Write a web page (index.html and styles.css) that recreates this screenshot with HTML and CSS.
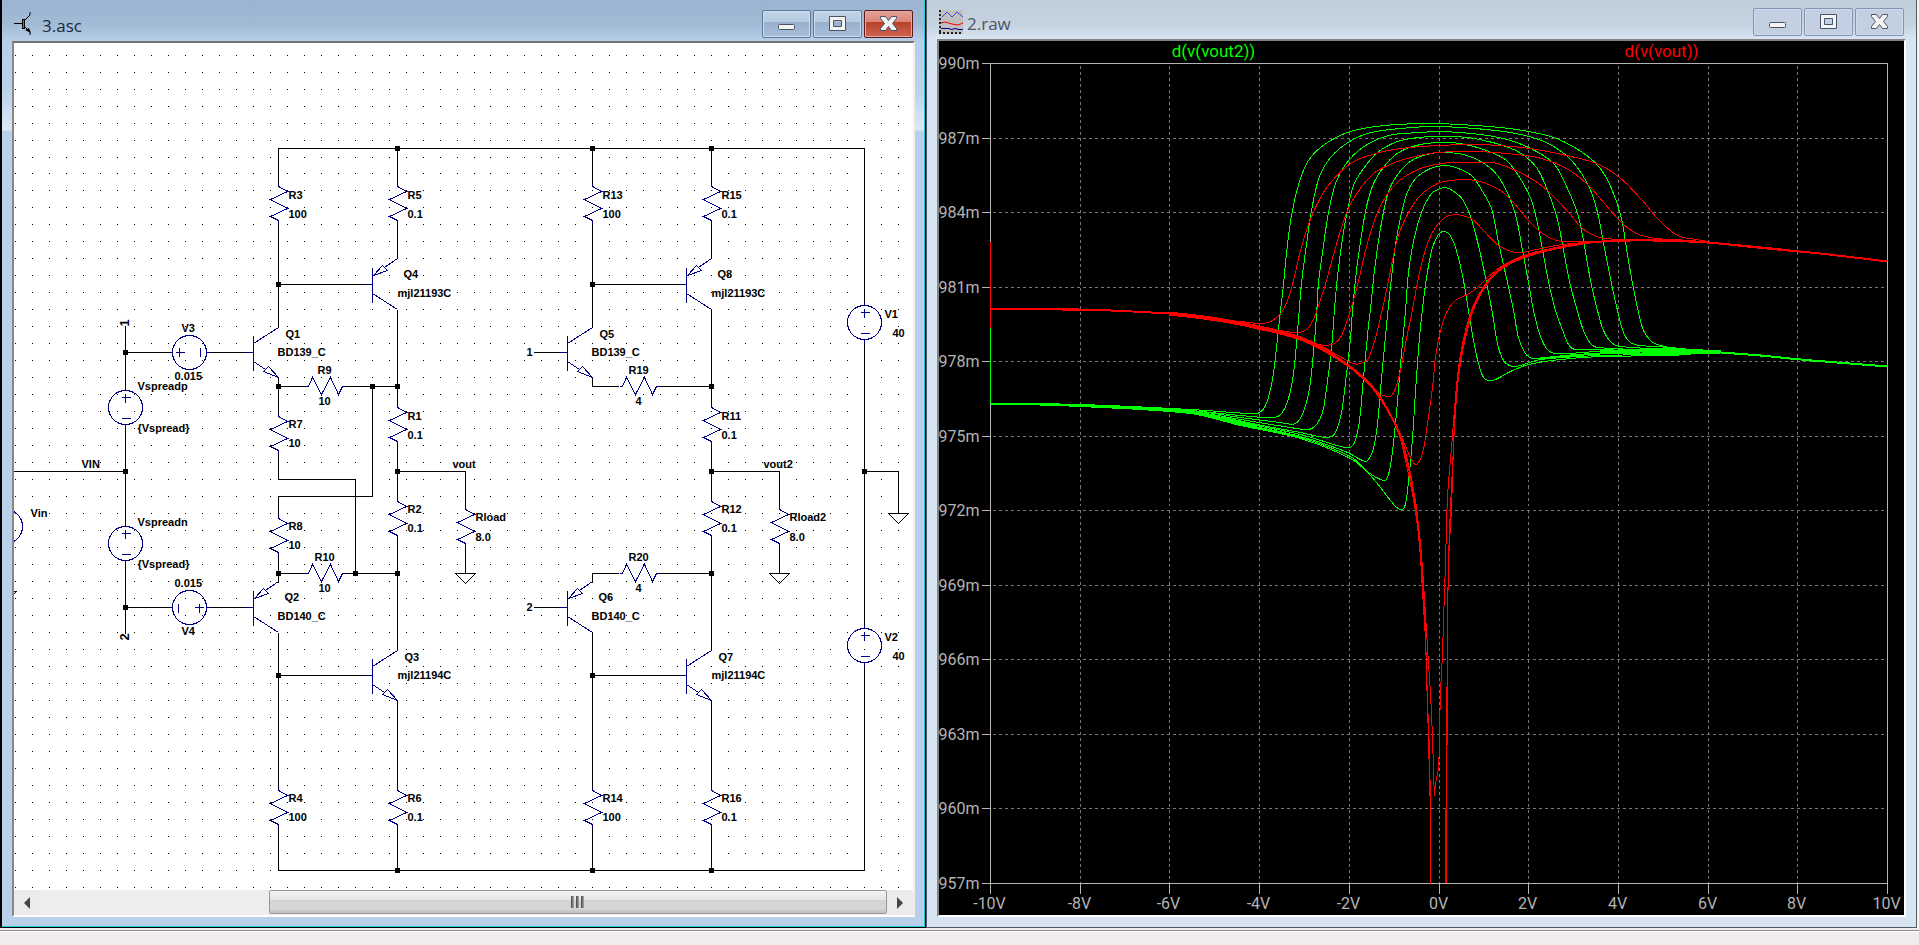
FILE: index.html
```html
<!DOCTYPE html>
<html lang="en">
<head>
    <meta charset="UTF-8">
    <meta name="viewport" content="width=device-width, initial-scale=1.0">
    <title>3.asc / 2.raw</title>
    <link rel="stylesheet" href="styles.css">
</head>
<body>
    <main class="desktop">
        <section class="window active">
            <header class="titlebar">
                <svg class="title-icon" width="24" height="24" viewBox="0 0 24 24" aria-hidden="true">
                    <path d="M0 11.500h8M11 8l5-5V0M11 15l5 5v3" fill="none" stroke="#000" stroke-width="1"/>
                    <rect x="8.500" y="7.500" width="2" height="9" fill="#777" stroke="#000"/>
                    <path d="M11 18l4-2 2 5z"/>
                </svg>
                <h1>3.asc</h1>
                <div class="controls">
                    <button type="button" aria-label="Minimize"><svg width="20" height="18" viewBox="0 0 20 18"><rect class="glyph" x="1.500" y="9.500" width="16" height="5" rx="1"/></svg></button>
                    <button type="button" aria-label="Maximize"><svg width="20" height="18" viewBox="0 0 20 18"><path class="glyph" fill-rule="evenodd" d="M1.500 1.500h16v14h-16zM5.500 5.500v6h8v-6z"/></svg></button>
                    <button type="button" class="close" aria-label="Close"><svg width="20" height="18" viewBox="0 0 20 18"><path class="glyph" d="M1.500 1.500h5l3 4 3-4h5v2l-4 5 4 5v2h-5l-3-4-3 4h-5v-2l4-5-4-5z"/></svg></button>
                </div>
            </header>
            <div class="client">
                <svg class="schematic" viewBox="13.500 42.500 899 847">
                    <defs>
                        <pattern id="dotsA" patternUnits="userSpaceOnUse" x="14.500" y="54.500" width="17" height="17"><rect width="1" height="1"/></pattern>
                        <pattern id="dotsB" patternUnits="userSpaceOnUse" x="489.500" y="54.500" width="17" height="17"><rect width="1" height="1"/></pattern>
                        <pattern id="dotsC" patternUnits="userSpaceOnUse" x="14.500" y="172.500" width="17" height="17"><rect width="1" height="1"/></pattern>
                        <pattern id="dotsD" patternUnits="userSpaceOnUse" x="489.500" y="172.500" width="17" height="17"><rect width="1" height="1"/></pattern>
                        <path id="res" d="M0 0V3L9 8L-8 16L9 25L-8 33L0 37V40"/>
                        <path id="resh" d="M0 0H3L7 -9L16 8L25 -9L33 8L37 0H40"/>
                        <path id="npn" d="M-8 0H0M0 -17V18M0 -9L25 -25M0 9L12 17M25 25L10 19L15 14Z"/>
                        <path id="pnp" d="M-8 0H0M0 -17V18M0 9L25 25M12 -17L25 -26M1 -9L10 -19L15 -14Z"/>
                        <g id="src"><circle r="17"/><path d="M0 -21V-17M0 17V21M-4 -10H5M0 -14V-5M-4 11H5"/></g>
                        <path id="gnd" d="M-10 0H10L0 10Z"/>
                        <rect id="node" x="-2.500" y="-2.500" width="5" height="5"/>
                    </defs>

                    <rect x="13.500" y="42.500" width="470" height="122" fill="url(#dotsA)"/>
                    <rect x="483.500" y="42.500" width="429" height="122" fill="url(#dotsB)"/>
                    <rect x="13.500" y="164.500" width="470" height="725" fill="url(#dotsC)"/>
                    <rect x="483.500" y="164.500" width="429" height="725" fill="url(#dotsD)"/>

                    <!-- wires -->
                    <g class="wire">
                        <path d="M278 183V148H864V305M278 827V870H864V662M864 339V628M864 471H898V513"/>
                        <path d="M278 223V327M278 377V413M278 453V479H355V573M278 515V496H372V386M278 555V582M278 632V787"/>
                        <path d="M278 284H364M278 675H364M278 386H305M345 386H397M278 573H305M345 573H397"/>
                        <path d="M397 148V183M397 223V258M397 309V404M397 444V498M397 538V650M397 700V787M397 827V870"/>
                        <path d="M397 471H465V506M465 546V573M13 471H125"/>
                        <path d="M125 325V390M125 424V526M125 560V633M125 352H172M206 352H245M125 607H172M206 607H245"/>
                        <path d="M592 148V183M592 223V327M592 377V386H618M658 386H711M592 582V573H618M658 573H711M592 632V787M592 827V870"/>
                        <path d="M592 284H678M592 675H678M533 352H559M533 607H559"/>
                        <path d="M711 148V183M711 223V258M711 309V404M711 444V498M711 538V650M711 700V787M711 827V870"/>
                        <path d="M711 471H779V506M779 546V573"/>
                        <use href="#gnd" x="465" y="573"/>
                        <use href="#gnd" x="779" y="573"/>
                        <use href="#gnd" x="898" y="513"/>
                        <use href="#gnd" x="6" y="591"/>
                    </g>

                    <!-- parts -->
                    <g class="part">
                        <use href="#res" x="278" y="183"/><use href="#res" x="397" y="183"/><use href="#res" x="592" y="183"/><use href="#res" x="711" y="183"/>
                        <use href="#res" x="397" y="404"/><use href="#res" x="711" y="404"/><use href="#res" x="278" y="413"/><use href="#res" x="278" y="515"/>
                        <use href="#res" x="397" y="498"/><use href="#res" x="711" y="498"/><use href="#res" x="465" y="506"/><use href="#res" x="779" y="506"/>
                        <use href="#res" x="278" y="787"/><use href="#res" x="397" y="787"/><use href="#res" x="592" y="787"/><use href="#res" x="711" y="787"/>
                        <use href="#resh" x="305" y="386"/><use href="#resh" x="305" y="573"/><use href="#resh" x="619" y="386"/><use href="#resh" x="619" y="573"/>
                        <use href="#pnp" x="372" y="284"/><use href="#pnp" x="686" y="284"/><use href="#pnp" x="253" y="607"/><use href="#pnp" x="567" y="607"/>
                        <use href="#npn" x="253" y="352"/><use href="#npn" x="567" y="352"/><use href="#npn" x="372" y="675"/><use href="#npn" x="686" y="675"/>
                        <use href="#src" x="125" y="407"/><use href="#src" x="125" y="543"/><use href="#src" x="864" y="322"/><use href="#src" x="864" y="645"/>
                        <use href="#src" x="5" y="526"/>
                        <use href="#src" transform="translate(189 352) rotate(-90)"/>
                        <use href="#src" transform="translate(189 607) rotate(90)"/>
                    </g>

                    <g>
                        <use href="#node" x="397" y="148"/><use href="#node" x="592" y="148"/><use href="#node" x="711" y="148"/>
                        <use href="#node" x="278" y="284"/><use href="#node" x="592" y="284"/><use href="#node" x="125" y="352"/>
                        <use href="#node" x="125" y="471"/><use href="#node" x="125" y="607"/><use href="#node" x="278" y="386"/>
                        <use href="#node" x="372" y="386"/><use href="#node" x="397" y="386"/><use href="#node" x="711" y="386"/>
                        <use href="#node" x="397" y="471"/><use href="#node" x="711" y="471"/><use href="#node" x="864" y="471"/>
                        <use href="#node" x="278" y="573"/><use href="#node" x="355" y="573"/><use href="#node" x="397" y="573"/>
                        <use href="#node" x="711" y="573"/><use href="#node" x="278" y="675"/><use href="#node" x="592" y="675"/>
                        <use href="#node" x="397" y="870"/><use href="#node" x="592" y="870"/><use href="#node" x="711" y="870"/>
                    </g>

                    <!-- labels -->
                    <g class="label">
                        <text x="288" y="198">R3</text><text x="288" y="217">100</text>
                        <text x="407" y="198">R5</text><text x="407" y="217">0.1</text>
                        <text x="602" y="198">R13</text><text x="602" y="217">100</text>
                        <text x="721" y="198">R15</text><text x="721" y="217">0.1</text>
                        <text x="403" y="277">Q4</text><text x="397" y="296">mjl21193C</text>
                        <text x="717" y="277">Q8</text><text x="711" y="296">mjl21193C</text>
                        <text x="285" y="337">Q1</text><text x="277" y="355">BD139_C</text>
                        <text x="599" y="337">Q5</text><text x="591" y="355">BD139_C</text>
                        <text x="181" y="331">V3</text><text x="174" y="379">0.015</text>
                        <text x="137" y="389">Vspreadp</text><text x="137" y="431">{Vspread}</text>
                        <text x="137" y="525">Vspreadn</text><text x="137" y="567">{Vspread}</text>
                        <text x="174" y="586">0.015</text><text x="181" y="634">V4</text>
                        <text x="81" y="467">VIN</text><text x="30" y="516">Vin</text>
                        <text x="317" y="373">R9</text><text x="318" y="404">10</text>
                        <text x="314" y="560">R10</text><text x="318" y="591">10</text>
                        <text x="628" y="373">R19</text><text x="635" y="404">4</text>
                        <text x="628" y="560">R20</text><text x="635" y="591">4</text>
                        <text x="288" y="427">R7</text><text x="288" y="446">10</text>
                        <text x="288" y="529">R8</text><text x="288" y="548">10</text>
                        <text x="407" y="419">R1</text><text x="407" y="438">0.1</text>
                        <text x="407" y="512">R2</text><text x="407" y="531">0.1</text>
                        <text x="721" y="419">R11</text><text x="721" y="438">0.1</text>
                        <text x="721" y="512">R12</text><text x="721" y="531">0.1</text>
                        <text x="452" y="467">vout</text><text x="763" y="467">vout2</text>
                        <text x="475" y="520">Rload</text><text x="475" y="540">8.0</text>
                        <text x="789" y="520">Rload2</text><text x="789" y="540">8.0</text>
                        <text x="284" y="600">Q2</text><text x="277" y="619">BD140_C</text>
                        <text x="598" y="600">Q6</text><text x="591" y="619">BD140_C</text>
                        <text x="404" y="660">Q3</text><text x="397" y="678">mjl21194C</text>
                        <text x="718" y="660">Q7</text><text x="711" y="678">mjl21194C</text>
                        <text x="288" y="801">R4</text><text x="288" y="820">100</text>
                        <text x="407" y="801">R6</text><text x="407" y="820">0.1</text>
                        <text x="602" y="801">R14</text><text x="602" y="820">100</text>
                        <text x="721" y="801">R16</text><text x="721" y="820">0.1</text>
                        <text x="884" y="317">V1</text><text x="892" y="336">40</text>
                        <text x="884" y="640">V2</text><text x="892" y="659">40</text>
                        <text x="526" y="355">1</text><text x="526" y="610">2</text>
                        <text class="big" transform="translate(128 326) rotate(-90)">1</text>
                        <text class="big" transform="translate(128 640) rotate(-90)">2</text>
                    </g>
                </svg>
                <div class="scrollbar">
                    <button type="button" class="arrow" aria-label="Scroll left"><svg width="8" height="12" viewBox="0 0 8 12"><path d="M7 0v12L1 6z"/></svg></button>
                    <div class="track">
                        <div class="thumb"><i></i><i></i><i></i></div>
                    </div>
                    <button type="button" class="arrow" aria-label="Scroll right"><svg width="8" height="12" viewBox="0 0 8 12"><path d="M1 0v12l6-6z"/></svg></button>
                </div>
            </div>
        </section>

        <section class="window inactive">
            <header class="titlebar">
                <svg class="title-icon" width="24" height="24" viewBox="0 0 24 24" aria-hidden="true">
                    <rect width="24" height="24" fill="#c0c0c0"/>
                    <path d="M1 0v24M0 23h24" fill="none" stroke="#222" stroke-width="2" stroke-dasharray="2 2"/>
                    <path d="M3 7l5-5 5 5 5-5 6 5" fill="none" stroke="#4040e0"/>
                    <path d="M2 13l4-1 7 2 6 1 5-2" fill="none" stroke="#f00"/>
                    <path d="M2 18.500h8l2 1 5-1 2 1h5" fill="none" stroke="#000080"/>
                </svg>
                <h1>2.raw</h1>
                <div class="controls">
                    <button type="button" aria-label="Minimize"><svg width="20" height="18" viewBox="0 0 20 18"><rect class="glyph" x="1.500" y="9.500" width="16" height="5" rx="1"/></svg></button>
                    <button type="button" aria-label="Maximize"><svg width="20" height="18" viewBox="0 0 20 18"><path class="glyph" fill-rule="evenodd" d="M1.500 1.500h16v14h-16zM5.500 5.500v6h8v-6z"/></svg></button>
                    <button type="button" aria-label="Close"><svg width="20" height="18" viewBox="0 0 20 18"><path class="glyph" d="M1.500 1.500h5l3 4 3-4h5v2l-4 5 4 5v2h-5l-3-4-3 4h-5v-2l4-5-4-5z"/></svg></button>
                </div>
            </header>
            <div class="client">
                <svg class="plot" viewBox="938.500 40.500 965 874">
                    <path class="grid" d="M1080 65V883M1169 65V883M1259 65V883M1349 65V883M1439 65V883M1528 65V883M1618 65V883M1708 65V883M1797 65V883"/>
                    <path class="grid" d="M992 138H1887M992 212H1887M992 287H1887M992 361H1887M992 436H1887M992 510H1887M992 585H1887M992 659H1887M992 734H1887M992 808H1887"/>
                    <rect class="axis" x="990" y="63" width="897" height="820"/>
                    <path class="axis" d="M981 63h9M981 138h9M981 212h9M981 287h9M981 361h9M981 436h9M981 510h9M981 585h9M981 659h9M981 734h9M981 808h9M981 883h9"/>
                    <path class="axis" d="M990 883v10M1080 883v10M1169 883v10M1259 883v10M1349 883v10M1439 883v10M1528 883v10M1618 883v10M1708 883v10M1797 883v10M1887 883v10"/>
                    <g class="y-labels">
                        <text x="979" y="68">990m</text>
                        <text x="979" y="143">987m</text>
                        <text x="979" y="217">984m</text>
                        <text x="979" y="292">981m</text>
                        <text x="979" y="366">978m</text>
                        <text x="979" y="441">975m</text>
                        <text x="979" y="515">972m</text>
                        <text x="979" y="590">969m</text>
                        <text x="979" y="664">966m</text>
                        <text x="979" y="739">963m</text>
                        <text x="979" y="813">960m</text>
                        <text x="979" y="888">957m</text>
                    </g>
                    <g class="x-labels">
                        <text x="989" y="908">-10V</text>
                        <text x="1079" y="908">-8V</text>
                        <text x="1168" y="908">-6V</text>
                        <text x="1258" y="908">-4V</text>
                        <text x="1348" y="908">-2V</text>
                        <text x="1438" y="908">0V</text>
                        <text x="1527" y="908">2V</text>
                        <text x="1617" y="908">4V</text>
                        <text x="1707" y="908">6V</text>
                        <text x="1796" y="908">8V</text>
                        <text x="1886" y="908">10V</text>
                    </g>
                    <text class="trace-name green" x="1213" y="56">d(v(vout2))</text>
                    <text class="trace-name red" x="1661" y="56">d(v(vout))</text>
                    <g id="traces"></g>
                </svg>
            </div>
        </section>
    </main>
    <footer class="statusbar"></footer>
    <script src="script.js"></script>
</body>
</html>
```

FILE: styles.css
```css
* {
    box-sizing: border-box;
}

body {
    margin: 0;
    background: #f0ecec;
    font-family: "Open Sans", "Noto Sans", sans-serif;
    color: #1a2a3a;
    overflow: hidden;
}

.desktop {
    display: grid;
    grid-template-columns: 926fr 991fr;
    padding-right: 2px;
    background: #f4f4f4;
}

.window {
    display: flex;
    flex-direction: column;
    min-width: 0;
}

.active {
    border: solid #000;
    border-width: 0 1px 1px 2px;
    box-shadow: inset -1px -1px 0 #21c8e0;
    background: linear-gradient(#9ab4d2 0, #a2bad5 24px, #b7cfe9 41px, #bbd2ea 90px, #dce8f5 130px, #b9d0ea 131px);
}

.inactive {
    border: solid #555a60;
    border-width: 0 1px 1px 1px;
    background: linear-gradient(#c0cedc 0, #c5d2df 24px, #d6e3f0 38px, #d7e4f2 39px);
}

.titlebar {
    display: flex;
    align-items: flex-start;
    height: 41px;
    padding: 10px 12px 0 10px;
}

.inactive .titlebar {
    height: 39px;
    padding-top: 8px;
}

.title-icon {
    margin: 2px 4px 0 2px;
}

h1 {
    margin: 0;
    font-size: 17px;
    font-weight: normal;
    line-height: 32px;
}

.inactive h1 {
    color: #4c5560;
}

.controls {
    display: flex;
    gap: 2px;
    margin-left: auto;
}

.controls button {
    display: flex;
    align-items: center;
    justify-content: center;
    width: 49px;
    height: 28px;
    padding: 0;
    border: 1px solid #5d7797;
    border-radius: 2px;
    background: linear-gradient(#c3d4e8 0, #b5c9e0 42%, #98b0cc 43%, #a9c0dc 100%);
    box-shadow: inset 0 0 0 1px #cfdeee;
}

.controls .close {
    border-color: #5a1a20;
    background: linear-gradient(#e3a39a 0, #d98578 42%, #b8402a 43%, #cf6552 100%);
    box-shadow: inset 0 0 0 1px #e6a79d;
}

.inactive .controls button {
    border-color: #8494b4;
    background: #c2d0e2;
    box-shadow: inset 0 0 0 1px #cfdbea;
}

.glyph {
    fill: #f4f4f4;
    stroke: #4a5468;
}

.client {
    margin: 0 10px 10px;
    border: 2px solid;
    border-color: #75726f #f0eeee #fff #8a8785;
    background: #fff;
}

.inactive .client {
    border-color: #858585 #fff #fff #858585;
    background: #000;
}

.schematic,
.plot {
    display: block;
    width: 100%;
    height: auto;
    shape-rendering: crispEdges;
}

.wire {
    fill: none;
    stroke: #000;
}

.part {
    fill: none;
    stroke: #000080;
}

.label {
    font: bold 11px "Liberation Sans", Arial, sans-serif;
}

.label .big {
    font-size: 13px;
}

/* plot */
.grid {
    stroke: #777;
    stroke-dasharray: 3 3;
}

.axis {
    fill: none;
    stroke: #b4b4b4;
}

.plot text {
    font: 16px Roboto, sans-serif;
    fill: #b4b4b4;
    text-anchor: middle;
}

.plot .y-labels text {
    text-anchor: end;
}

.plot .trace-name {
    font-size: 17px;
}

.plot .green {
    fill: #00ff00;
}

.plot .red {
    fill: #ff0000;
}

.trace-green {
    fill: none;
    stroke: #00ff00;
}

.trace-red {
    fill: none;
    stroke: #ff0000;
}

.thick {
    stroke-width: 2px;
}

.thicker {
    stroke-width: 4px;
}

/* horizontal scrollbar */
.scrollbar {
    display: flex;
    height: 25px;
    background: #ededed;
}

.arrow {
    display: flex;
    align-items: center;
    justify-content: center;
    width: 26px;
    padding: 0;
    border: none;
    background: #ebebeb;
}

.arrow path {
    fill: #444;
}

.track {
    display: flex;
    flex: 1;
    justify-content: flex-end;
}

.thumb {
    display: flex;
    align-items: center;
    justify-content: center;
    gap: 2px;
    width: 73%;
    height: 24px;
    border: 1px solid #979797;
    border-radius: 2px;
    background: linear-gradient(#f2f2f2 0, #e6e6e8 40%, #d3d3d5 41%, #d6d6d8 80%, #c0c0c0 100%);
}

.thumb i {
    width: 3px;
    height: 12px;
    background: linear-gradient(90deg, #444, #aaa);
}

.statusbar {
    height: 17px;
    margin-top: 2px;
    border-top: 1px solid #8c8c8c;
    box-shadow: inset 0 1px 0 #fff;
}
```

FILE: script.js
```js
const traces = document.getElementById('traces');

// shared ends of the two families of curves
const greenEnd = ' 1720,352 1800,359 1887,366';
const redStart = '990,309 1060,308 1110,310 1169,313 1210,318 ';
const redEnd = ' 1602,241 1652,239 1706,242 1766,247 1819,253 1887,261';

const green = [
    '990,403 1080,404 1190,409 1247,413 1257,413 1264,407 1269,393 1273,372 1277,338 1280,310 1283,284 1286,253 1291,215 1299,181 1308,160 1324,144 1350,131 1384,125 1425,123 1459,124 1500,127 1528,131 1556,138 1582,152 1599,167 1611,188 1621,218 1626,248 1632,283 1638,312 1643,330 1651,341 1660,345 1670,347',
    '990,403 1080,404 1190,410 1240,415 1273,417 1281,413 1288,398 1293,373 1297,331 1301,283 1306,244 1311,210 1318,179 1327,161 1343,145 1367,133 1400,128 1435,126 1474,128 1510,132 1541,140 1566,155 1581,173 1591,192 1598,216 1603,243 1611,283 1617,310 1623,332 1630,342 1640,345 1670,347',
    '990,403 1080,405 1190,410 1240,417 1280,422 1295,423 1303,411 1309,388 1313,351 1316,315 1318,282 1322,252 1328,212 1335,183 1345,164 1362,147 1388,135 1420,132 1440,131 1480,134 1510,140 1536,151 1554,164 1567,188 1577,213 1583,240 1590,280 1597,310 1603,330 1611,342 1620,346 1670,349',
    '990,403 1080,405 1190,411 1240,419 1290,427 1308,429 1316,424 1322,412 1326,388 1331,348 1334,309 1337,276 1342,238 1347,210 1353,185 1363,168 1377,152 1397,141 1418,137 1440,136 1467,137 1496,143 1519,152 1536,167 1547,190 1556,215 1562,244 1569,281 1577,311 1583,330 1590,343 1597,347 1670,350',
    '990,403 1080,405 1190,411 1240,421 1300,432 1327,437 1335,432 1341,412 1345,382 1350,338 1352,310 1356,270 1362,228 1367,202 1374,181 1386,163 1400,151 1420,144 1440,142 1460,143 1486,150 1506,160 1521,180 1531,200 1537,223 1548,281 1555,310 1563,332 1568,344 1574,349 1593,349 1670,351',
    '990,403 1080,406 1190,412 1240,422 1300,434 1340,446 1349,447 1354,442 1359,420 1363,377 1368,325 1370,308 1374,270 1380,228 1388,191 1398,173 1411,160 1430,153 1444,152 1463,154 1482,162 1497,175 1509,197 1516,218 1522,250 1528,282 1533,310 1539,333 1546,348 1555,353 1600,351 1670,352',
    '990,403 1080,406 1190,412 1240,423 1300,436 1345,451 1362,460 1367,460 1373,448 1377,423 1381,378 1386,325 1388,305 1392,268 1396,238 1405,197 1415,178 1430,168 1443,165 1455,167 1471,175 1482,191 1491,208 1498,242 1507,282 1513,310 1518,337 1525,353 1532,358 1543,357 1600,353 1670,353',
    '990,403 1080,406 1190,413 1240,424 1300,437 1350,456 1368,472 1380,479 1386,479 1391,458 1396,412 1400,364 1405,310 1408,272 1413,241 1421,212 1431,193 1440,188 1445,187 1452,190 1462,199 1470,216 1478,245 1486,282 1492,313 1497,343 1503,360 1512,366 1523,364 1540,359 1600,355 1670,354',
    '990,403 1080,406 1190,413 1240,425 1300,438 1350,458 1368,473 1380,487 1390,500 1399,509 1404,507 1408,481 1412,438 1415,391 1419,337 1422,308 1427,271 1432,247 1438,234 1443,231 1449,234 1455,247 1462,275 1468,310 1473,340 1478,363 1483,377 1488,380 1495,379 1510,371 1528,364 1560,359 1600,356 1670,355'
];

const red = [
    '1240,321 1262,323 1272,320 1281,312 1287,300 1292,284 1300,250 1307,227 1315,207 1327,186 1350,163 1375,153 1400,148 1437,145 1473,144 1499,145 1529,148 1557,153 1596,163 1619,177 1641,199 1657,218 1677,235 1696,239 1720,243 1766,247 1819,253 1887,261',
    '1259,326 1285,331 1299,332 1306,329 1312,321 1318,305 1324,287 1337,240 1347,210 1357,192 1373,173 1392,163 1410,157 1437,152 1475,151 1516,154 1541,158 1566,168 1586,183 1604,203 1621,222 1636,233 1656,238 1690,240 1766,247 1819,253 1887,261',
    '1259,327 1300,338 1318,344 1331,344 1340,337 1348,316 1357,285 1365,250 1372,226 1378,210 1388,192 1403,177 1423,167 1450,162 1475,162 1497,163 1527,176 1547,190 1569,213 1582,228 1599,237 1625,239 1652,240 1706,242 1766,247 1819,253 1887,261',
    '1259,327 1300,338 1330,351 1353,363 1360,363 1367,359 1372,347 1377,330 1387,285 1397,238 1408,212 1420,195 1437,183 1450,180 1467,179 1483,182 1500,190 1512,201 1529,221 1542,233 1556,240 1569,241' + redEnd,
    '1259,327 1300,338 1349,365 1368,382 1380,394 1387,396 1391,395 1395,388 1400,370 1405,343 1412,309 1418,277 1425,249 1433,230 1443,218 1453,214 1462,215 1472,219 1483,230 1498,245 1514,252 1522,252 1536,249 1562,244' + redEnd,
    '1259,327 1300,338 1349,366 1375,389 1395,423 1403,441 1412,461 1416,464 1422,453 1427,423 1432,387 1435,357 1440,330 1447,310 1455,300 1467,294 1477,287 1486,278 1502,265 1526,254 1562,246' + redEnd,
    '1259,328 1300,338 1349,366 1375,391 1398,430 1407,462 1415,503 1420,543 1423,583 1426,630 1428,663 1430,693 1432,737 1434,794 1435,783 1438,767 1439,733 1440,693 1442,653 1443,620 1445,563 1447,497 1451,447 1455,397 1459,360 1465,330 1473,305 1486,282 1502,266 1526,255 1562,246' + redEnd,
    '1259,329 1300,339 1349,367 1375,391 1397,430 1406,465 1414,505 1419,545 1422,590 1425,640 1426,673 1428,740 1430,820 1430,883 M 1445,883 1446,740 1447,640 1448,563 1451,507 1453,447 1456,397 1460,363 1466,333 1474,307 1487,283 1503,267 1527,256 1563,247' + redEnd,
    '1259,328 1300,337 1349,365 1375,390 1398,432 1408,467 1416,507 1420,553 1424,610 1427,700 1429,753 1430,820 1430,883 M 1446,883 1447,640 1448,563 1450,507 1453,447 1455,397 1459,363 1465,333 1473,307 1486,284 1502,268 1526,256 1562,246' + redEnd
];

// Catmull-Rom spline through a list of "x,y" points
function smooth(list) {
    const p = list.trim().split(/\s+/).map(s => s.split(',').map(Number));
    let d = `M${p[0]}`;
    for (let i = 0; i < p.length - 1; i++) {
        const a = p[i - 1] || p[i];
        const b = p[i];
        const c = p[i + 1];
        const e = p[i + 2] || c;
        // scale the tangents so uneven spacing does not overshoot
        const len = Math.hypot(c[0] - b[0], c[1] - b[1]);
        const t1 = len / (3 * Math.hypot(c[0] - a[0], c[1] - a[1]) || 1);
        const t2 = len / (3 * Math.hypot(e[0] - b[0], e[1] - b[1]) || 1);
        d += `C${b[0] + (c[0] - a[0]) * t1},${b[1] + (c[1] - a[1]) * t1} ${c[0] - (e[0] - b[0]) * t2},${c[1] - (e[1] - b[1]) * t2} ${c}`;
    }
    return d;
}

function draw(className, d) {
    const path = document.createElementNS('http://www.w3.org/2000/svg', 'path');
    path.setAttribute('class', className);
    path.setAttribute('d', d);
    traces.appendChild(path);
}

green.forEach(points => draw('trace-green', smooth(points + greenEnd)));
draw('trace-green', 'M990 327V403');
red.forEach(points => draw('trace-red', (redStart + points).split('M').map(smooth).join('')));

// where the runs lie on top of each other the lines grow into a band
draw('trace-green thick', smooth('990,403 1080,405 1140,408 1190,412 1225,418 1259,425'));
draw('trace-green thick', smooth('1540,358 1570,355 1600,353 1640,351'));
draw('trace-green thicker', smooth('1600,352 1640,350 1680,350 1720,352'));
draw('trace-green thick', smooth('1720,352 1760,355 1800,359 1887,366'));
draw('trace-red thick', smooth('990,309 1060,309 1110,310 1169,313'));
draw('trace-red thicker', smooth('1169,313 1210,318 1259,327 1300,338 1330,352'));
draw('trace-red thick', smooth('1330,352 1349,366 1375,391 1398,431 1408,466 1415,505 1420,550'));
draw('trace-red thick', smooth('1459,363 1465,333 1473,306 1486,283 1502,267 1526,256 1562,246 1602,241 1652,240 1706,242 1766,248 1819,253 1887,261'));
draw('trace-red', 'M990 241V327');
```
